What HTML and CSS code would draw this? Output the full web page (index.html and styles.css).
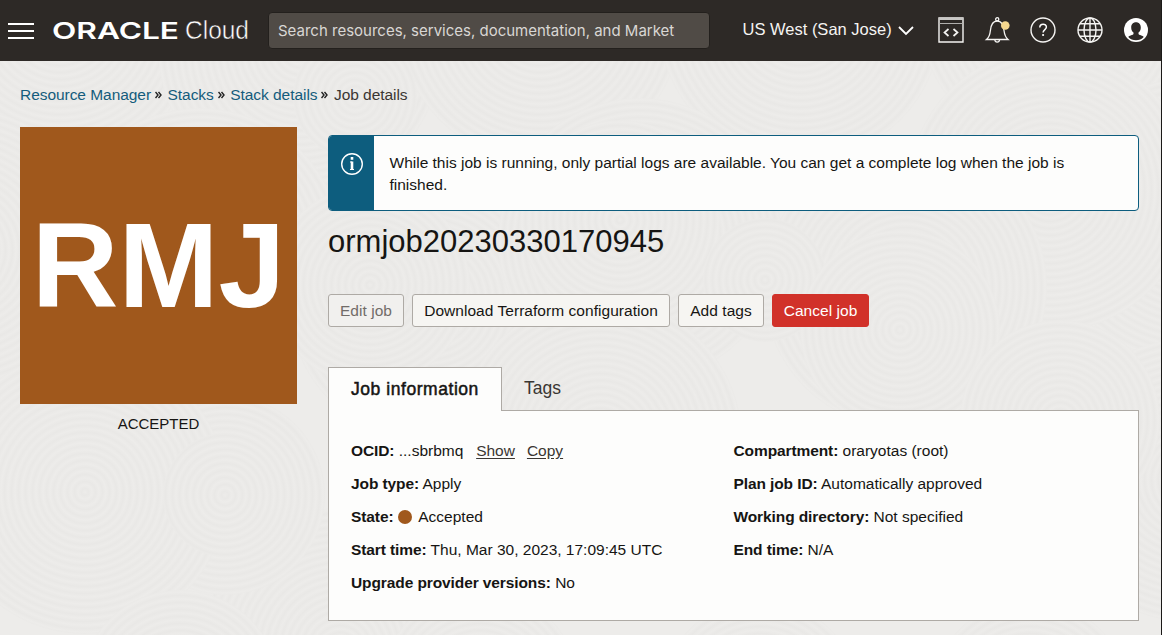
FILE: index.html
```html
<!DOCTYPE html>
<html lang="en">
<head>
<meta charset="utf-8">
<title>Job details</title>
<link rel="stylesheet" href="styles.css">
</head>
<body>
<svg class="texture" width="1161" height="635" aria-hidden="true">
  <defs>
    <radialGradient id="rings" gradientUnits="userSpaceOnUse" cx="0" cy="0" r="7" spreadMethod="repeat">
      <stop offset="0" stop-color="#edecea"/><stop offset=".5" stop-color="#e9e8e6"/><stop offset="1" stop-color="#edecea"/>
    </radialGradient>
    <circle id="big" r="142" fill="url(#rings)"/>
    <circle id="mid" r="100" fill="url(#rings)"/>
    <circle id="small" r="62" fill="url(#rings)"/>
  </defs>
  <use href="#big" x="60" y="20"/><use href="#big" x="300" y="50"/><use href="#big" x="540" y="20"/><use href="#big" x="800" y="20"/><use href="#big" x="1060" y="10"/>
  <use href="#big" x="-40" y="250"/><use href="#big" x="200" y="250"/><use href="#big" x="430" y="300"/><use href="#big" x="640" y="240"/><use href="#big" x="1190" y="220"/>
  <use href="#big" x="1050" y="190"/><use href="#mid" x="370" y="285"/><use href="#mid" x="620" y="220"/><use href="#big" x="905" y="287"/><use href="#small" x="765" y="280"/>
  <use href="#big" x="340" y="650"/><use href="#big" x="600" y="440"/><use href="#mid" x="900" y="330"/><use href="#big" x="1190" y="480"/><use href="#mid" x="1060" y="420"/>
  <use href="#mid" x="225" y="495"/><use href="#big" x="85" y="492"/><use href="#small" x="225" y="495"/><use href="#small" x="355" y="97"/>
  <use href="#mid" x="180" y="690"/><use href="#mid" x="480" y="690"/><use href="#mid" x="760" y="700"/><use href="#mid" x="1030" y="700"/>
</svg>

<header class="topbar">
  <svg class="menu" width="26" height="16" viewBox="0 0 26 16"><path d="M0 1h26M0 8h26M0 15h26" stroke="#fff" stroke-width="2"/></svg>
  <svg class="logo" width="200" height="34" viewBox="0 -3 200 34">
    <text class="logo-oracle" x="0" y="22" textLength="127" lengthAdjust="spacingAndGlyphs">ORACLE</text>
    <text class="logo-cloud" x="133" y="22" textLength="64" lengthAdjust="spacingAndGlyphs">Cloud</text>
  </svg>
  <div class="search"><span class="search-text">Search resources, services, documentation, and Marketplace</span></div>
  <div class="region"><span>US West (San Jose)</span>
    <svg width="16" height="10" viewBox="0 0 16 10"><path d="M1 1l7 7 7-7" fill="none" stroke="#fff" stroke-width="1.8"/></svg>
  </div>
  <nav class="tools">
    <svg width="26" height="26" viewBox="0 0 26 26" fill="none" stroke="#f5f4f2"><path d="M1 1h24v24H1z" stroke-width="1.4"/><path d="M1 2h24" stroke="#c8c7c5" stroke-width="2"/><path d="M1 6.500h24" stroke="#b0afad"/><path d="M10.500 12l-4 3.500 4 3.500M15.500 12l4 3.500-4 3.500" stroke-width="1.700"/></svg>
    <svg width="26" height="26" viewBox="0 0 26 26" fill="none" stroke="#f5f4f2" stroke-width="1.300"><path d="M2.500 22.500h21.500c-2.800-2.300-3.500-5-4-9-.6-6-2.500-9.500-6.800-9.500S7 7.500 6.400 13.500c-.4 4-1.100 6.700-3.900 9z"/><circle cx="13.200" cy="2.300" r="1.600"/><path d="M10.800 22.700c.3 3.200 4.500 3.200 4.800 0"/><circle cx="21.300" cy="8.500" r="4.300" fill="#f5d78e" stroke="none"/></svg>
    <svg width="26" height="26" viewBox="0 0 26 26"><circle cx="13" cy="13" r="12" fill="none" stroke="#f5f4f2" stroke-width="1.400"/><path d="M9.800 10.500c0-4.300 6.600-4.200 6.600-.4 0 2.500-3.300 2.500-3.300 5.500" fill="none" stroke="#fff" stroke-width="1.500"/><circle cx="13.100" cy="18" r="1.100" fill="#fff"/></svg>
    <svg width="26" height="26" viewBox="0 0 26 26" fill="none" stroke="#f5f4f2" stroke-width="1.400"><circle cx="13" cy="13" r="12"/><ellipse cx="13" cy="13" rx="6" ry="12"/><path d="M13 1v24M1 13h24M3 6.800h20M3 19.200h20"/></svg>
    <svg width="26" height="26" viewBox="0 0 26 26"><circle cx="13" cy="13" r="12" fill="#fff"/><path d="M13 5.200c3 0 4.800 2.100 4.800 5.200 0 2.300-.9 4.200-2.300 5.200v1.300c0 1 4.700 1.500 5.200 3.100-2 2.100-4.600 3.200-7.700 3.200S7.300 22.100 5.300 20c.5-1.600 5.200-2.100 5.200-3.100v-1.300c-1.400-1-2.300-2.900-2.300-5.200 0-3.100 1.800-5.200 4.800-5.200z" fill="#2d2926"/></svg>
  </nav>
</header>

<div class="page">
  <nav class="crumbs">
    <a>Resource Manager</a><svg class="sep" viewBox="0 0 7 8"><path d="M.5 1L3 4 .5 7M3.500 1L6 4 3.500 7"/></svg>
    <a>Stacks</a><svg class="sep" viewBox="0 0 7 8"><path d="M.5 1L3 4 .5 7M3.500 1L6 4 3.500 7"/></svg>
    <a>Stack details</a><svg class="sep" viewBox="0 0 7 8"><path d="M.5 1L3 4 .5 7M3.500 1L6 4 3.500 7"/></svg>
    <span>Job details</span>
  </nav>
  <div class="columns">
    <aside class="side">
      <div class="tile">RMJ</div>
      <div class="status">ACCEPTED</div>
    </aside>
    <main class="main">
      <div class="notice">
        <div class="notice-icon"><svg width="24" height="24" viewBox="0 0 24 24"><circle cx="12" cy="12" r="10.300" fill="none" stroke="#fff" stroke-width="1.400"/><path d="M12 5v2.700M12 9.500v8.500" stroke="#fff" stroke-width="2.600"/><path d="M10 10h2M10 17.500h4" stroke="#fff" stroke-width="1"/></svg></div>
        <p class="notice-text">While this job is running, only partial logs are available. You can get a complete log when the job is finished.</p>
      </div>
      <h1 class="title">ormjob20230330170945</h1>
      <div class="actions">
        <button class="btn btn-edit" disabled>Edit job</button>
        <button class="btn btn-download">Download Terraform configuration</button>
        <button class="btn btn-tags">Add tags</button>
        <button class="btn btn-cancel">Cancel job</button>
      </div>
      <div class="tabs"><div class="tab active">Job information</div><div class="tab">Tags</div></div>
      <section class="panel">
        <div class="col">
          <div class="row"><b>OCID:</b> ...sbrbmq <a class="show">Show</a><a class="copy">Copy</a></div>
          <div class="row"><b>Job type:</b> Apply</div>
          <div class="row"><b>State:</b> <i class="dot"></i>Accepted</div>
          <div class="row"><b>Start time:</b> Thu, Mar 30, 2023, 17:09:45 UTC</div>
          <div class="row"><b>Upgrade provider versions:</b> No</div>
        </div>
        <div class="col">
          <div class="row"><b>Compartment:</b> oraryotas (root)</div>
          <div class="row"><b>Plan job ID:</b> Automatically approved</div>
          <div class="row"><b>Working directory:</b> Not specified</div>
          <div class="row"><b>End time:</b> N/A</div>
        </div>
      </section>
    </main>
  </div>
</div>
</body>
</html>
```
FILE: styles.css
```css
* { box-sizing: border-box; }
body {
  margin: 0; height: 635px; overflow: hidden; position: relative;
  background: #edecea; border-right: 1px solid #1b1918; color: #161513;
  font: 15.500px/22px "Liberation Sans", Arial, sans-serif;
}
.texture { position: absolute; left: 0; top: 0; z-index: -1; }
.topbar { height: 61px; background: #2d2926; display: flex; align-items: center; padding-left: 8px; color: #f5f4f2; }
.menu { flex: none; }
.logo { flex: none; margin-left: 18px; overflow: visible; }
.logo text { fill: #fff; }
.logo-oracle { font: 600 23.500px Inter, sans-serif; }
.logo-cloud { font: 300 25px "Liberation Sans", Arial, sans-serif; stroke: #2d2926; stroke-width: .5px; }
.search { flex: none; width: 442px; height: 37px; margin-left: 16px; padding: 0 34px 0 9px; background: #504b46; border: 1px solid #23201d; border-radius: 4px; display: flex; align-items: center; }
.search-text { font: 15px/22px Inter, sans-serif; color: #d9d7d4; white-space: nowrap; overflow: hidden; }
.region { flex: none; width: 175px; margin: -3px 0 0 32.500px; display: flex; align-items: center; gap: 6px; font-size: 16.500px; white-space: nowrap; }
.region svg { margin-top: 3px; }
.tools { display: flex; gap: 20.400px; margin: -2px 0 0 20px; }
.page { padding: 23px 22px 0 20px; }
.crumbs { display: flex; align-items: center; color: #3a3632; white-space: nowrap; letter-spacing: -.05px; }
.crumbs a { color: #145c7c; }
.sep { width: 7px; height: 8px; margin: 0 5.500px 0 4px; fill: none; stroke: #222; stroke-width: 1.400; }
.columns { display: flex; gap: 31px; margin-top: 21px; }
.side { width: 277px; flex: none; }
.tile { height: 277px; background: #a0581c; color: #fff; display: flex; align-items: center; justify-content: center; font: bold 120px/277px "Liberation Sans", Arial, sans-serif; }
.status { text-align: center; margin-top: 9px; font-size: 15px; }
.main { flex: 1; padding-top: 8px; }
.notice { height: 76px; display: flex; border: 1px solid #0d5d7e; border-radius: 4px; background: #fdfdfc; overflow: hidden; }
.notice-icon { width: 45px; background: #0d5d7e; padding: 16px 0 0 11px; flex: none; }
.notice-text { margin: 0; padding: 16px 60px 0 15.500px; }
.title { margin: 13px 0 0; font-size: 31px; font-weight: 400; line-height: 36px; }
.actions { display: flex; gap: 8px; margin-top: 34px; }
.btn { height: 33px; padding: 0; border: 1px solid #aeaaa5; border-radius: 3px; background: #f6f5f2; color: #161513; font: inherit; letter-spacing: .04px; white-space: nowrap; }
.btn-edit { width: 76px; color: #716c68; background: #f1f0ee; }
.btn-download { width: 258px; }
.btn-tags { width: 86px; }
.btn-cancel { width: 97px; background: #d13129; border-color: #d13129; color: #fff; }
.tabs { display: flex; margin-top: 40px; height: 43px; font-size: 17.500px; }
.tab { padding: 10px 22px 0; color: #3a3632; }
.tab.active { width: 174px; height: 44px; background: #fdfdfc; border: 1px solid #aeaaa5; border-bottom: 0; position: relative; z-index: 1; color: #161513; letter-spacing: .55px; -webkit-text-stroke: .5px #161513; white-space: nowrap; }
.panel { height: 211px; border: 1px solid #aeaaa5; background: #fdfdfc; padding: 23px 22px 0; display: grid; grid-template-columns: 382.500px 1fr; }
.row { height: 33px; line-height: 33px; white-space: nowrap; }
.row b { letter-spacing: -.1px; }
.row a { color: #3a3632; text-decoration: underline; text-underline-offset: 2px; }
.show { margin-left: 8.500px; }
.copy { margin-left: 12px; }
.dot { display: inline-block; width: 14px; height: 14px; border-radius: 50%; background: #a0581c; margin-right: 6.500px; vertical-align: -2px; }
```
